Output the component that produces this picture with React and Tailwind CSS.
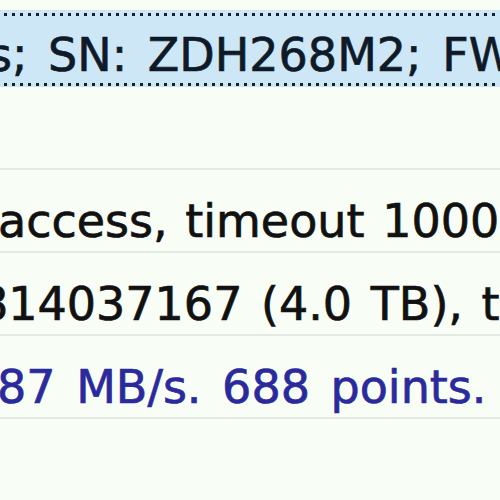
import React from 'react';

const dots =
  'h-[3px] bg-[repeating-linear-gradient(90deg,transparent_0_4px,#16202c_4px_7px,transparent_7px_8px)]';

const LogRow = ({ children, className = '' }) => (
  <div className="h-[83px] border-b-2 border-[#e3e8e2] pt-[28px]">
    <div className={className}>{children}</div>
  </div>
);

const App = () => {
  return (
    <div className="h-[500px] w-[500px] overflow-hidden whitespace-nowrap bg-[#f8fdf6] font-['DejaVu_Sans',Verdana,sans-serif] text-[46px] leading-none [-webkit-text-stroke:0.7px]">
      <div className="h-[10px]" />

      {/* selected row */}
      <div className="flex h-[77px] flex-col bg-[#cde7f6] pt-[3px] pb-[1px]">
        <div className={dots} />
        <div className="flex-1 pt-[16px] text-[#0f1a28]">
          <div className="-ml-[12px] [word-spacing:6px]">s; SN: ZDH268M2; FW: MJAOA5E0</div>
        </div>
        <div className={dots} />
      </div>

      <LogRow />
      <LogRow className="-ml-[2px] text-[#111111] [word-spacing:3px]">access, timeout 10000ms</LogRow>
      <LogRow className="-ml-[21px] text-[#111111] [word-spacing:4px]">814037167 (4.0 TB), time 0:00</LogRow>
      <LogRow className="-ml-[3px] text-[#2a2a9c] [word-spacing:6px]">87 MB/s. 688 points.</LogRow>
      <LogRow />
    </div>
  );
};

export default App;
